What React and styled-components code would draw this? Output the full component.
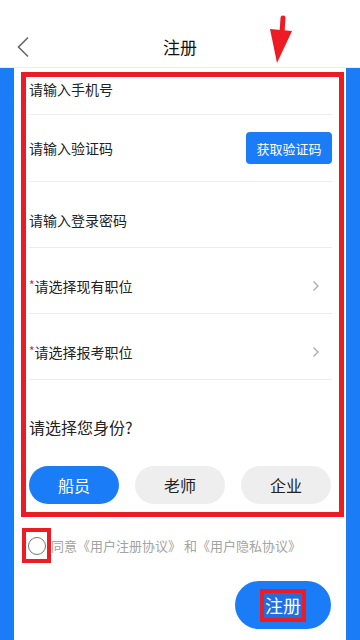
import React, { useState } from 'react'
import styled, { createGlobalStyle } from 'styled-components'

const Global = createGlobalStyle`
  body {
    margin: 0;
    font-family: "Noto Sans CJK SC", "Noto Sans", sans-serif;
    background: #fff;
  }
`

const BLUE = '#1b7cf7'
const RED = '#ed1c24'

const Page = styled.div`
  width: 360px;
  height: 640px;
  display: flex;
  flex-direction: column;
  overflow: hidden;
`

const Header = styled.header`
  position: relative;
  height: 68px;
  flex-shrink: 0;
  display: flex;
  align-items: center;
  justify-content: center;
  background: #fff;
  border-bottom: 1px solid #eee;
  box-sizing: border-box;
  padding-top: 26px;
  h1 {
    margin: 0;
    font-size: 17px;
    font-weight: 400;
    color: #111;
  }
`

const Back = styled.svg`
  position: absolute;
  left: 16px;
  top: 36px;
`

const Pointer = styled.svg`
  position: absolute;
  left: 268px;
  top: 15px;
`

const Body = styled.div`
  flex: 1;
  background: ${BLUE};
  padding: 0 14px;
  display: flex;
`

const Card = styled.div`
  flex: 1;
  background: #fff;
  padding: 4px 2px 0 7px;
  display: flex;
  flex-direction: column;
`

const Marked = styled.div`
  border: 5px solid ${RED};
  padding: 0 7px 8px 3px;
`

const Row = styled.div`
  height: ${p => p.$h}px;
  display: flex;
  align-items: ${p => (p.$top ? 'flex-start' : 'center')};
  padding-top: ${p => p.$pt || 0}px;
  box-sizing: border-box;
  border-bottom: 1px solid #ececec;
  font-size: 14px;
  color: #222;
  span.label {
    flex: 1;
  }
  i {
    color: ${RED};
    font-style: normal;
    font-size: 12px;
    position: relative;
    top: -2px;
  }
`

const CodeButton = styled.button`
  width: 86px;
  height: 32px;
  border: 0;
  border-radius: 4px;
  background: ${BLUE};
  color: #fff;
  font-family: inherit;
  font-size: 13px;
  padding: 0;
`

const Chevron = styled.svg`
  margin-right: 12px;
`

const Question = styled.div`
  font-size: 16px;
  color: #222;
  padding-top: 36px;
  line-height: 22px;
`

const Roles = styled.div`
  display: flex;
  gap: 16px;
  margin-top: 28px;
`

const Role = styled.button`
  width: 90px;
  height: 38px;
  border: 0;
  border-radius: 19px;
  background: ${p => (p.$active ? BLUE : '#eeeeee')};
  color: ${p => (p.$active ? '#fff' : '#222')};
  font-family: inherit;
  font-size: 16px;
  padding: 0;
`

const Agree = styled.div`
  display: flex;
  align-items: center;
  margin-top: 11px;
  font-size: 13px;
  color: #a3a3a3;
  white-space: nowrap;
`

const CheckBox = styled.div`
  width: 29px;
  height: 35px;
  box-sizing: border-box;
  border: 4px solid ${RED};
  display: flex;
  align-items: center;
  justify-content: center;
  margin-left: 1px;
  span {
    width: 16px;
    height: 16px;
    border: 1px solid #777;
    border-radius: 50%;
  }
`

const Submit = styled.button`
  align-self: flex-end;
  width: 96px;
  height: 48px;
  margin: 18px 13px 0 0;
  border: 0;
  border-radius: 24px;
  background: ${BLUE};
  display: flex;
  align-items: center;
  justify-content: center;
  padding: 0;
  span {
    border: 4px solid ${RED};
    padding: 0 1px;
    background: #1f6fe0;
    color: #fff;
    font-family: "Noto Sans CJK SC", sans-serif;
    font-size: 18px;
    line-height: 25px;
  }
`

function Arrow() {
  return (
    <Chevron width="8" height="12" viewBox="0 0 8 12">
      <path d="M1.5 1.5 L6 6 L1.5 10.5" fill="none" stroke="#aaa" strokeWidth="1.3" />
    </Chevron>
  )
}

export default function App() {
  const [role, setRole] = useState('船员')
  return (
    <Page>
      <Global />
      <Header>
        <Back width="14" height="22" viewBox="0 0 14 22">
          <path d="M12 1.5 L2.5 11 L12 20.5" fill="none" stroke="#666" strokeWidth="1.6" />
        </Back>
        <h1>注册</h1>
        <Pointer width="28" height="50" viewBox="0 0 28 50">
          <path d="M15 3 L14 18" stroke={RED} strokeWidth="5" strokeLinecap="round" />
          <path d="M2 14 L24 16 L9 48 Z" fill={RED} />
        </Pointer>
      </Header>
      <Body>
        <Card>
          <Marked>
            <Row $h={38} $top $pt={2}>
              <span className="label">请输入手机号</span>
            </Row>
            <Row $h={67}>
              <span className="label">请输入验证码</span>
              <CodeButton>获取验证码</CodeButton>
            </Row>
            <Row $h={66} $pt={10}>
              <span className="label">请输入登录密码</span>
            </Row>
            <Row $h={66} $pt={10}>
              <span className="label"><i>*</i>请选择现有职位</span>
              <Arrow />
            </Row>
            <Row $h={66} $pt={10}>
              <span className="label"><i>*</i>请选择报考职位</span>
              <Arrow />
            </Row>
            <Question>请选择您身份?</Question>
            <Roles>
              {['船员', '老师', '企业'].map(r => (
                <Role key={r} $active={role === r} onClick={() => setRole(r)}>{r}</Role>
              ))}
            </Roles>
          </Marked>
          <Agree>
            <CheckBox><span /></CheckBox>
            同意《用户注册协议》 和《用户隐私协议》
          </Agree>
          <Submit><span>注册</span></Submit>
        </Card>
      </Body>
    </Page>
  )
}
